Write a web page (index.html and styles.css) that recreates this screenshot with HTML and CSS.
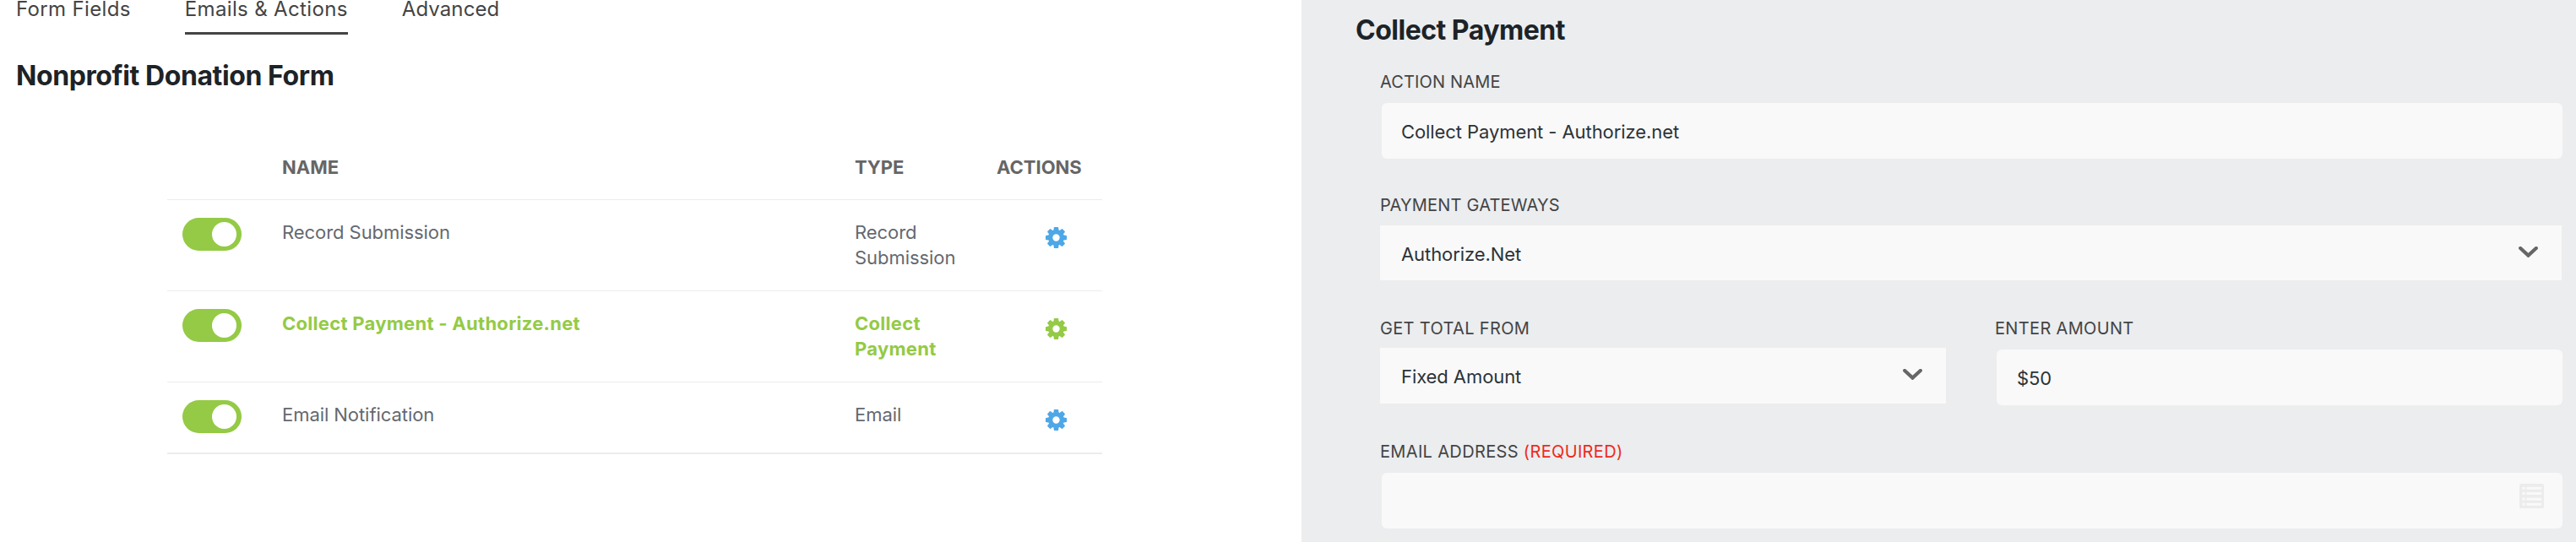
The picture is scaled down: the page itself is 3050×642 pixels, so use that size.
FILE: index.html
```html
<!DOCTYPE html>
<html lang="en">
<head>
<meta charset="utf-8">
<title>Emails &amp; Actions</title>
<link rel="stylesheet" href="styles.css">
</head>
<body>
<svg class="sprite" aria-hidden="true">
  <symbol id="gear" viewBox="-12.5 -12.5 25 25">
    <circle r="6.8" fill="none" stroke="currentColor" stroke-width="5.2"/>
    <g id="teeth" fill="currentColor">
      <path id="tooth" d="M-3.2-8 -2.6-11.9Q-2.5-12.5-1.9-12.5H1.9Q2.5-12.5 2.6-11.9L3.2-8Z"/>
      <use href="#tooth" transform="rotate(45)"/>
      <use href="#tooth" transform="rotate(90)"/>
      <use href="#tooth" transform="rotate(135)"/>
      <use href="#tooth" transform="rotate(180)"/>
      <use href="#tooth" transform="rotate(225)"/>
      <use href="#tooth" transform="rotate(270)"/>
      <use href="#tooth" transform="rotate(315)"/>
    </g>
  </symbol>
  <symbol id="chevron" viewBox="0 0 23 13">
    <path d="M2.2 2 11.5 10.6 20.8 2" fill="none" stroke="currentColor" stroke-width="4.2" stroke-linecap="round"/>
  </symbol>
</svg>
<div class="app">
  <main class="builder">
    <nav class="tabs">
      <a class="tab">Form Fields</a>
      <a class="tab tab-active">Emails &amp; Actions</a>
      <a class="tab tab-last">Advanced</a>
    </nav>
    <h2 class="title form-title">Nonprofit Donation Form</h2>
    <section class="actions">
      <div class="row head">
        <span></span><span>NAME</span><span class="head-type">TYPE</span><span>ACTIONS</span>
      </div>
      <div class="row item">
        <span class="toggle"><i class="knob"></i></span>
        <span>Record Submission</span>
        <span class="type">Record Submission</span>
        <svg class="gear"><use href="#gear"/></svg>
      </div>
      <div class="row item selected">
        <span class="toggle"><i class="knob"></i></span>
        <span>Collect Payment - Authorize.net</span>
        <span class="type">Collect Payment</span>
        <svg class="gear"><use href="#gear"/></svg>
      </div>
      <div class="row item last">
        <span class="toggle"><i class="knob"></i></span>
        <span>Email Notification</span>
        <span class="type">Email</span>
        <svg class="gear"><use href="#gear"/></svg>
      </div>
    </section>
  </main>
  <aside class="settings">
    <h2 class="title panel-title">Collect Payment</h2>
    <div class="fields">
      <div class="field wide">
        <label class="label label-name">ACTION NAME</label>
        <div class="input">Collect Payment - Authorize.net</div>
      </div>
      <div class="field wide">
        <label class="label label-gateways">PAYMENT GATEWAYS</label>
        <div class="select select-gateway"><span>Authorize.Net</span><svg class="chevron"><use href="#chevron"/></svg></div>
      </div>
      <div class="field">
        <label class="label">GET TOTAL FROM</label>
        <div class="select select-total"><span>Fixed Amount</span><svg class="chevron"><use href="#chevron"/></svg></div>
      </div>
      <div class="field">
        <label class="label">ENTER AMOUNT</label>
        <div class="input amount">$50</div>
      </div>
      <div class="field wide">
        <label class="label">EMAIL ADDRESS <span class="required">(REQUIRED)</span></label>
        <div class="input email">
          <svg class="merge" viewBox="0 0 29 29">
            <rect width="29" height="29" rx="1.5" fill="#ececec"/>
            <g fill="#f9f9f9">
              <rect x="3.5" y="3.8" width="3" height="3"/><rect x="8.3" y="3.8" width="18" height="3"/>
              <rect x="3.5" y="10" width="3" height="3"/><rect x="8.3" y="10" width="18" height="3"/>
              <rect x="3.5" y="16.7" width="3" height="3"/><rect x="8.3" y="16.7" width="18" height="3"/>
              <rect x="3.5" y="22.8" width="3" height="3"/><rect x="8.3" y="22.8" width="18" height="3"/>
            </g>
          </svg>
        </div>
      </div>
    </div>
  </aside>
</div>
</body>
</html>
```
FILE: styles.css
```css
* { box-sizing: border-box; }

body {
  margin: 0;
  font-family: Inter, "Liberation Sans", sans-serif;
  font-size: 22px;
  background: #fff;
}

.sprite { display: none; }

.app {
  display: grid;
  grid-template-columns: 1541px 1fr;
  height: 642px;
  overflow: hidden;
}

/* Left side: tabs and actions table */
.tabs {
  display: flex;
  gap: 64px;
  padding-left: 19px;
  color: #444;
  font-size: 24px;
  line-height: 22px;
  letter-spacing: 0.35px;
}

.tab { padding-bottom: 16px; border-bottom: 3px solid transparent; }
.tab-active { border-bottom-color: #444; }
.tab-last { letter-spacing: 0.1px; }

.title {
  margin: 0;
  color: #1d2327;
  font-size: 32px;
  font-weight: 650;
  line-height: 40px;
}

.form-title { padding: 29px 0 0 19px; letter-spacing: -0.4px; }

.actions { width: 1107px; margin: 50px 0 0 198px; }

.row {
  display: grid;
  grid-template-columns: 118px 678px 168px 1fr;
  padding-left: 18px;
  border-bottom: 1px solid #ececec;
  line-height: 29.5px;
  align-items: start;
}

.head {
  height: 77px;
  padding-top: 23px;
  color: #666;
  font-weight: 700;
  line-height: 30px;
}

.head-type { letter-spacing: -0.1px; }

.item { height: 108px; padding-top: 24px; color: #646970; letter-spacing: -0.06px; }
.item.last { height: 85px; border-bottom-width: 2px; }
.item.selected { color: #94ca45; font-weight: 700; letter-spacing: 0.28px; }
.type { width: 140px; }

.toggle {
  display: flex;
  justify-content: flex-end;
  width: 70px;
  height: 38.5px;
  margin-top: -3px;
  padding: 5px 6px;
  border-radius: 20px;
  background: #94ca45;
}

.knob { width: 29px; height: 29px; border-radius: 50%; background: #fff; }

.gear {
  width: 25px;
  height: 25px;
  margin: 8px 0 0 58px;
  color: #4ea7e6;
}

.selected .gear { color: #94ca45; }

/* Right side: settings panel */
.settings { background: #ebedef; }

.panel-title { padding: 16px 0 0 64px; letter-spacing: -0.5px; }

.fields {
  display: grid;
  grid-template-columns: 670px 670px;
  grid-auto-rows: 146px;
  column-gap: 58px;
  padding: 29px 0 0 93px;
}

.wide { grid-column: 1 / -1; }

.label {
  display: block;
  color: #444;
  font-size: 20px;
  line-height: 24px;
  letter-spacing: 0.34px;
}

.label-name { letter-spacing: 0.15px; }
.label-gateways { letter-spacing: 0.2px; }
.required { color: #ee2a1b; }

.input, .select {
  display: flex;
  align-items: center;
  height: 66px;
  color: #2c3338;
  background: #f9f9f9;
  letter-spacing: -0.08px;
}

.input {
  margin: 13px 0 0 2px;
  padding: 1px 0 0 23px;
  border-radius: 6px;
}

.wide .input { margin-right: -2px; }
.input.amount { margin-right: -2px; padding-left: 24px; }

.select {
  justify-content: space-between;
  padding: 2px 28px 0 25px;
}

.select-gateway { height: 65px; margin: 12px -1px 0 0; }
.select-total { margin-top: 11px; }

.chevron { width: 23px; height: 13px; margin-top: -5px; color: #666; }

.input.email { justify-content: flex-end; padding: 0 22px 0 0; }
.merge { width: 29px; height: 29px; margin-top: -11px; }
```
